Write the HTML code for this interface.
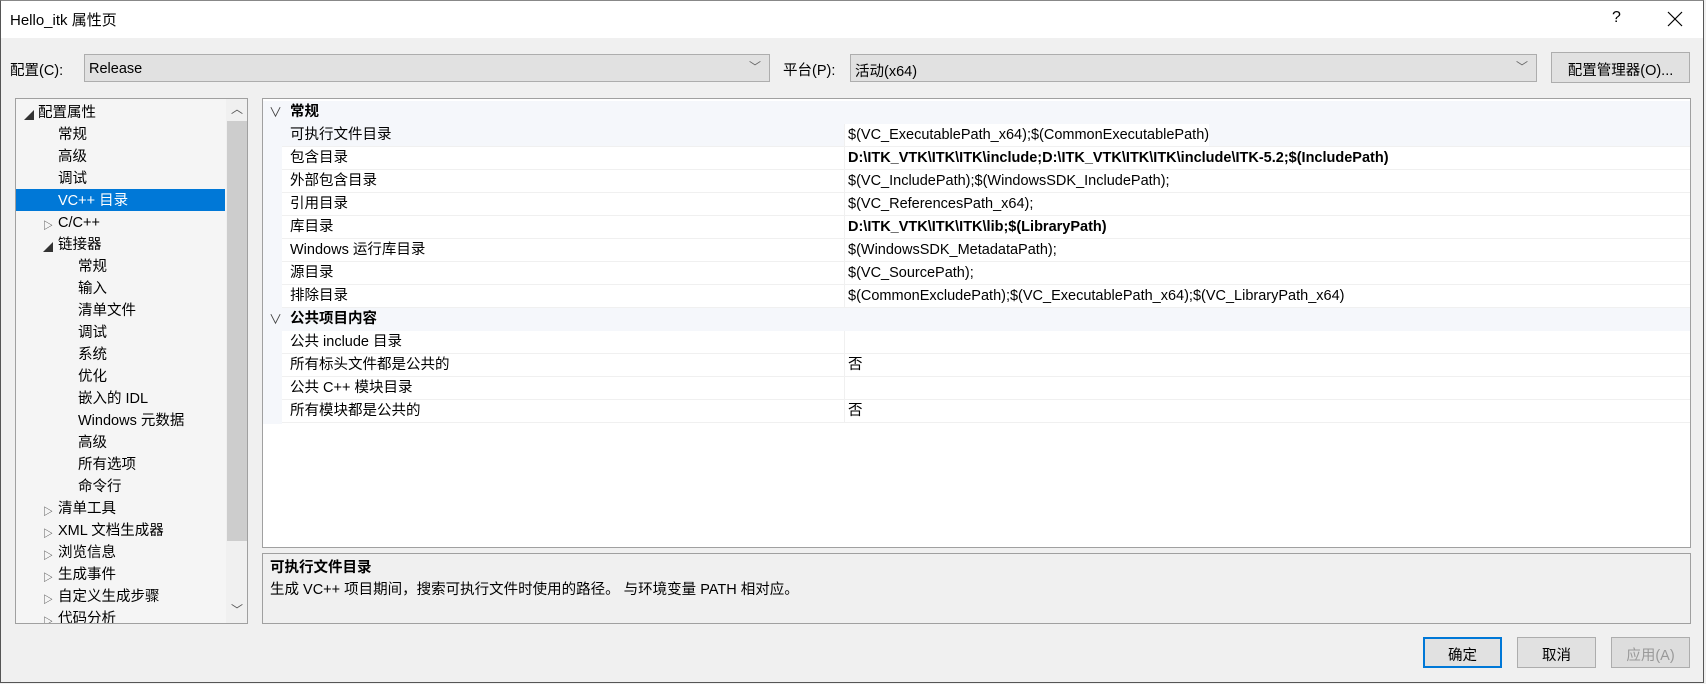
<!DOCTYPE html><html><head><meta charset="utf-8"><style>
*{box-sizing:border-box;margin:0;padding:0}
body{width:1706px;height:684px;overflow:hidden;background:#f0f0f0;font-family:"Liberation Sans","Noto Sans CJK SC",sans-serif;font-size:14.5px;color:#000;position:relative}
.abs{position:absolute}
.win{left:0;top:0;width:1704px;height:683px;border:1px solid #555;border-top:1px solid #888}
.title{left:1px;top:1px;width:1702px;height:37px;background:#fff}
.combo{background:#e1e1e1;border:1px solid #adadad;height:28px;padding:5px 0 0 4px}
.combo .ar{position:absolute;right:8px;top:3px;color:#666;font-size:12px}
.btn{background:#e1e1e1;border:1px solid #adadad;text-align:center;padding-top:6px}
.tree{left:15px;top:98px;width:233px;height:526px;background:#f5f5f5;border:1px solid #a0a0a0;overflow:hidden}
.ti{position:absolute;height:22px;line-height:22px;white-space:nowrap}
.tri{position:absolute;font-size:10px;color:#333}
.grid{left:262px;top:98px;width:1429px;height:450px;background:#fff;border:1px solid #a0a0a0;overflow:hidden}
.row{position:absolute;left:19px;width:1409px;height:23px;border-bottom:1px solid #f0f0f0;line-height:22px}
.row .n{position:absolute;left:8px}
.row .v{position:absolute;left:562px;height:22px;padding-left:3px;border-left:1px solid #f0f0f0}
.cat{position:absolute;left:0;width:1428px;height:23px;background:#f5f7fb;line-height:23px;font-weight:bold;z-index:2}
.desc{left:262px;top:553px;width:1429px;height:71px;border:1px solid #a0a0a0;padding:3px 0 0 7px;line-height:22px}
</style></head><body>
<div class="abs win"></div>
<div class="abs title"></div>
<div class="abs" style="left:10px;top:9px;font-size:15px">Hello_itk 属性页</div>
<div class="abs" style="left:1612px;top:9px;font-size:16px">?</div>
<svg class="abs" style="left:1667px;top:11px" width="16" height="16"><path d="M1 1L15 15M15 1L1 15" stroke="#000" stroke-width="1.2"/></svg>

<div class="abs" style="left:10px;top:59px">配置(C):</div>
<div class="abs combo" style="left:84px;top:54px;width:686px;padding-top:6px">Release<span class="ar">﹀</span></div>
<div class="abs" style="left:783px;top:59px">平台(P):</div>
<div class="abs combo" style="left:850px;top:54px;width:687px">活动(x64)<span class="ar">﹀</span></div>
<div class="abs btn" style="left:1551px;top:52px;width:139px;height:31px">配置管理器(O)...</div>

<div class="abs tree">
<div class="tri" style="left:8px;top:8px">◢</div><div class="ti" style="left:22px;top:3px">配置属性</div>
<div class="ti" style="left:42px;top:25px">常规</div>
<div class="ti" style="left:42px;top:47px">高级</div>
<div class="ti" style="left:42px;top:69px">调试</div>
<div class="ti" style="left:0;top:90px;width:209px;background:#0078d7;color:#fff;padding-left:42px;line-height:24px">VC++ 目录</div>
<div class="tri" style="left:27px;top:118px">▷</div><div class="ti" style="left:42px;top:113px">C/C++</div>
<div class="tri" style="left:27px;top:140px">◢</div><div class="ti" style="left:42px;top:135px">链接器</div>
<div class="ti" style="left:62px;top:157px">常规</div>
<div class="ti" style="left:62px;top:179px">输入</div>
<div class="ti" style="left:62px;top:201px">清单文件</div>
<div class="ti" style="left:62px;top:223px">调试</div>
<div class="ti" style="left:62px;top:245px">系统</div>
<div class="ti" style="left:62px;top:267px">优化</div>
<div class="ti" style="left:62px;top:289px">嵌入的 IDL</div>
<div class="ti" style="left:62px;top:311px">Windows 元数据</div>
<div class="ti" style="left:62px;top:333px">高级</div>
<div class="ti" style="left:62px;top:355px">所有选项</div>
<div class="ti" style="left:62px;top:377px">命令行</div>
<div class="tri" style="left:27px;top:404px">▷</div><div class="ti" style="left:42px;top:399px">清单工具</div>
<div class="tri" style="left:27px;top:426px">▷</div><div class="ti" style="left:42px;top:421px">XML 文档生成器</div>
<div class="tri" style="left:27px;top:448px">▷</div><div class="ti" style="left:42px;top:443px">浏览信息</div>
<div class="tri" style="left:27px;top:470px">▷</div><div class="ti" style="left:42px;top:465px">生成事件</div>
<div class="tri" style="left:27px;top:492px">▷</div><div class="ti" style="left:42px;top:487px">自定义生成步骤</div>
<div class="tri" style="left:27px;top:514px">▷</div><div class="ti" style="left:42px;top:509px">代码分析</div>
<div style="position:absolute;left:210px;top:0;width:22px;height:526px;background:#f0f0f0"></div>
<div style="position:absolute;left:211px;top:22px;width:20px;height:420px;background:#cdcdcd"></div>
<div style="position:absolute;left:215px;top:1px;font-size:12px;color:#555">︿</div>
<div style="position:absolute;left:215px;top:502px;font-size:12px;color:#555">﹀</div>
</div>

<div class="abs grid">
<div style="position:absolute;left:0;top:25px;width:19px;height:300px;background:#f5f7fb"></div>
<div class="cat" style="top:2px"><span style="position:absolute;left:6px;font-weight:normal;color:#444;font-size:13px">∨</span><span style="position:absolute;left:27px">常规</span></div>
<div class="row" style="top:25px;background:#f5f7fb"><span class="n">可执行文件目录</span><span class="v" style="background:#fff">$(VC_ExecutablePath_x64);$(CommonExecutablePath)</span></div>
<div class="row" style="top:48px"><span class="n">包含目录</span><span class="v"><b>D:\ITK_VTK\ITK\ITK\include;D:\ITK_VTK\ITK\ITK\include\ITK-5.2;$(IncludePath)</b></span></div>
<div class="row" style="top:71px"><span class="n">外部包含目录</span><span class="v">$(VC_IncludePath);$(WindowsSDK_IncludePath);</span></div>
<div class="row" style="top:94px"><span class="n">引用目录</span><span class="v">$(VC_ReferencesPath_x64);</span></div>
<div class="row" style="top:117px"><span class="n">库目录</span><span class="v"><b>D:\ITK_VTK\ITK\ITK\lib;$(LibraryPath)</b></span></div>
<div class="row" style="top:140px"><span class="n">Windows 运行库目录</span><span class="v">$(WindowsSDK_MetadataPath);</span></div>
<div class="row" style="top:163px"><span class="n">源目录</span><span class="v">$(VC_SourcePath);</span></div>
<div class="row" style="top:186px"><span class="n">排除目录</span><span class="v">$(CommonExcludePath);$(VC_ExecutablePath_x64);$(VC_LibraryPath_x64)</span></div>
<div class="cat" style="top:209px"><span style="position:absolute;left:6px;font-weight:normal;color:#444;font-size:13px">∨</span><span style="position:absolute;left:27px">公共项目内容</span></div>
<div class="row" style="top:232px"><span class="n">公共 include 目录</span><span class="v"></span></div>
<div class="row" style="top:255px"><span class="n">所有标头文件都是公共的</span><span class="v">否</span></div>
<div class="row" style="top:278px"><span class="n">公共 C++ 模块目录</span><span class="v"></span></div>
<div class="row" style="top:301px"><span class="n">所有模块都是公共的</span><span class="v">否</span></div>
</div>

<div class="abs desc"><b>可执行文件目录</b><br>生成 VC++ 项目期间，搜索可执行文件时使用的路径。 与环境变量 PATH 相对应。</div>

<div class="abs btn" style="left:1423px;top:637px;width:79px;height:31px;border:2px solid #0078d7;padding-top:5px">确定</div>
<div class="abs btn" style="left:1517px;top:637px;width:79px;height:31px">取消</div>
<div class="abs btn" style="left:1611px;top:637px;width:79px;height:31px;color:#999;background:#ddd">应用(A)</div>
</body></html>
